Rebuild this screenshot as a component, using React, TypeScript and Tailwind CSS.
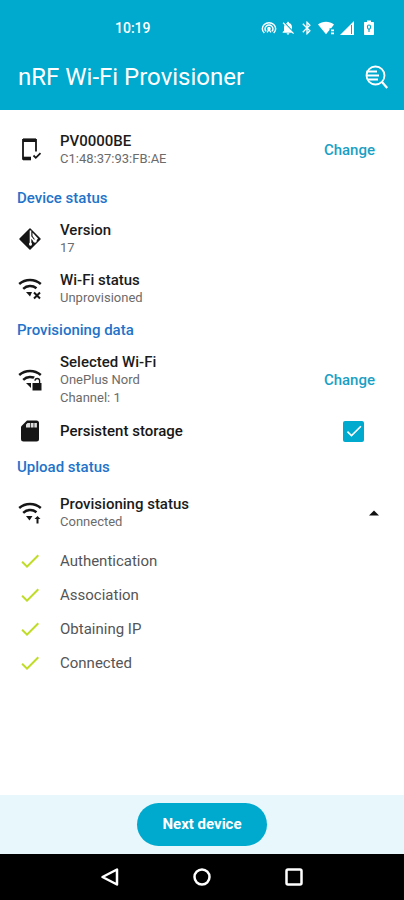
import { useState } from "react";
import type { ReactNode } from "react";
import { MdBluetooth, MdCheck, MdNotificationsOff } from "react-icons/md";

const steps = ["Authentication", "Association", "Obtaining IP", "Connected"];

function HotspotIcon() {
  return (
    <svg viewBox="0 0 24 24" className="size-4" fill="none" stroke="currentColor" strokeWidth="2.2">
      <path d="M5 19.500a10 9 0 1 1 14 0" />
      <path d="M7.600 17a6 5.500 0 1 1 8.800 0" />
      <circle cx="12" cy="13" r="1.600" fill="currentColor" />
      <path d="M9 18.500l3-4 3 4" />
    </svg>
  );
}

function StatusWifiIcon() {
  return (
    <svg viewBox="0 0 18 16" className="h-4 w-[18px]" fill="currentColor">
      <path d="M0 4.500C2.400 2.600 5 1.800 8 1.800s5.600.8 8 2.700L13.200 8.300H11.500V10L8 14.200z" />
      <path d="M13 9.500h3v1.800h-3zM13 12.500h3v1.800h-3z" />
    </svg>
  );
}

function SignalIcon() {
  return (
    <svg viewBox="0 0 16 16" className="size-4" fill="currentColor">
      <path d="M1 15L15 1v14z" />
      <path d="M12.500 5V14" stroke="#00a9ce" strokeWidth="1" />
    </svg>
  );
}

function BatteryIcon() {
  return (
    <svg viewBox="0 0 12 16" className="h-4 w-3" fill="none">
      <path d="M4 0.500h4V2h2.200q.8 0 .8.800v11.400q0 .8-.8.800H1.800q-.8 0-.8-.800V2.800Q1 2 1.800 2H4z" fill="currentColor" />
      <path d="M6 12V9.500M6 9.500C3.800 8.500 4 5 6 5s2.200 3.500 0 4.500" stroke="#00a9ce" strokeWidth="1.200" />
    </svg>
  );
}

function SearchLogIcon() {
  return (
    <svg viewBox="0 0 24 24" className="size-6" fill="none" stroke="currentColor" strokeWidth="1.800">
      <circle cx="11.500" cy="10.500" r="9" />
      <path d="M18 17l5.200 6" strokeWidth="2.200" />
      <path d="M2.500 6.500H13M2.500 10.500H15M3 14.500H14" />
    </svg>
  );
}

function PhoneCheckIcon() {
  return (
    <svg viewBox="0 0 24 24" className="size-6" fill="none" stroke="currentColor">
      <path d="M5 2.200h13" strokeWidth="3.600" />
      <path d="M5 20.500h8" strokeWidth="3.600" />
      <path d="M5 1v20.800M18 1V13.500" strokeWidth="1.800" />
      <path d="M15.500 17.500l2.300 2.300 4.700-4.700" strokeWidth="1.800" />
    </svg>
  );
}

function VersionIcon() {
  return (
    <svg viewBox="0 0 24 24" className="size-6">
      <path d="M12 2L22 12 12 22 2 12z" fill="currentColor" stroke="currentColor" strokeWidth="1.500" strokeLinejoin="round" />
      <path d="M12.500 3.500v15M12.500 9.500l4 5" stroke="#fff" strokeWidth="1.600" />
      <path d="M14.500 5.500l5.500 6-2 2.500-3.500-5z" fill="#fff" />
      <circle cx="12.500" cy="17" r="1.500" fill="#fff" />
      <circle cx="17" cy="14" r="1.700" fill="#fff" />
    </svg>
  );
}

function SdCardIcon() {
  return (
    <svg viewBox="0 0 24 24" className="size-6">
      <path d="M9 1.500h9.500Q21 1.500 21 4v16q0 2.500-2.500 2.500h-13Q3 22.500 3 20V7.500z" fill="currentColor" />
      <path d="M9.500 4h2.800v4.500H8V5.500zM13 4h2.600v4.500h-2.600zM16.300 4h2.600v4.500h-2.600z" fill="#ddd" />
    </svg>
  );
}

function WifiIcon({ children }: { children: ReactNode }) {
  return (
    <svg viewBox="0 0 24 24" className="size-6" fill="none" stroke="currentColor" strokeWidth="2.500">
      <path d="M1.200 7C7.500 1.600 16.500 1.600 22.800 7" />
      <path d="M5.200 11.800C9 8.300 14.500 8.200 18.500 11.300" />
      {children}
    </svg>
  );
}

function Row({
  icon,
  title,
  lines,
  children,
}: {
  icon: ReactNode;
  title: string;
  lines: string[];
  children?: ReactNode;
}) {
  return (
    <div className="flex items-center py-[7px] pl-[18px] pr-[29px]">
      <span className="w-[42px] shrink-0 text-[#161616]">{icon}</span>
      <div className="flex-1">
        <h3 className="text-[15px] font-medium leading-[18px] text-[#1b1b1b]">{title}</h3>
        {lines.map((line) => (
          <p key={line} className="text-[13px] leading-[18px] text-[#6b6b6b]">
            {line}
          </p>
        ))}
      </div>
      {children}
    </div>
  );
}

function SectionTitle({ children }: { children: ReactNode }) {
  return <h2 className="px-[17px] py-[7px] text-[15px] font-medium leading-[18px] text-[#2273c9]">{children}</h2>;
}

function ChangeButton() {
  return (
    <button type="button" className="text-[15px] font-medium leading-[18px] text-[#1a9fc4]">
      Change
    </button>
  );
}

export default function App() {
  const [open, setOpen] = useState(true);
  const [persistent, setPersistent] = useState(true);

  return (
    <div className="flex min-h-screen flex-col bg-white font-['Roboto',sans-serif]">
      {/* Status bar and title */}
      <header className="bg-[#00a9ce] text-white">
        <div className="flex h-14 items-center justify-between pl-[115px] pr-[29px]">
          <span className="text-sm font-medium">10:19</span>
          <div className="flex items-center gap-[3px]">
            <HotspotIcon />
            <MdNotificationsOff className="size-4" />
            <MdBluetooth className="size-4" />
            <StatusWifiIcon />
            <SignalIcon />
            <span className="pl-[5px]">
              <BatteryIcon />
            </span>
          </div>
        </div>
        <div className="flex h-[54px] items-center justify-between pb-3 pl-[18px] pr-4">
          <h1 className="text-2xl">nRF Wi-Fi Provisioner</h1>
          <button type="button" aria-label="Show logs">
            <SearchLogIcon />
          </button>
        </div>
      </header>

      <main className="flex-1 pt-[15px]">
        <Row icon={<PhoneCheckIcon />} title="PV0000BE" lines={["C1:48:37:93:FB:AE"]}>
          <ChangeButton />
        </Row>

        <section className="pt-[7px]">
          <SectionTitle>Device status</SectionTitle>
          <Row icon={<VersionIcon />} title="Version" lines={["17"]} />
          <Row
            icon={
              <WifiIcon>
                <path d="M8 15h6l-2 4.500z" fill="currentColor" stroke="none" />
                <path d="M16 15.500l6 6M22 15.500l-6 6" strokeWidth="2" />
              </WifiIcon>
            }
            title="Wi-Fi status"
            lines={["Unprovisioned"]}
          />
        </section>

        <section>
          <SectionTitle>Provisioning data</SectionTitle>
          <Row
            icon={
              <WifiIcon>
                <path d="M8 15h5v5z" fill="currentColor" stroke="none" />
                <path d="M17 15v-2.500a2.200 2.200 0 0 1 4.400 0V15" stroke="#fff" strokeWidth="3.800" />
                <path d="M14.500 15h9v7.500h-9z" fill="currentColor" stroke="none" />
                <path d="M17 12.800a2.200 2.200 0 0 1 4.600 0V16" strokeWidth="1.300" />
              </WifiIcon>
            }
            title="Selected Wi-Fi"
            lines={["OnePlus Nord", "Channel: 1"]}
          >
            <ChangeButton />
          </Row>
          <label className="flex h-[34px] items-center pl-[18px] pr-10 text-[#161616]">
            <span className="w-[42px] shrink-0">
              <SdCardIcon />
            </span>
            <span className="flex-1 text-[15px] font-medium">Persistent storage</span>
            <span className="grid">
              <input
                type="checkbox"
                checked={persistent}
                onChange={(e) => setPersistent(e.target.checked)}
                className="col-start-1 row-start-1 size-[21px] appearance-none rounded-xs border-2 border-[#00a9ce] checked:bg-[#00a9ce]"
              />
              <MdCheck className="pointer-events-none col-start-1 row-start-1 size-5 place-self-center text-white" />
            </span>
          </label>
        </section>

        <section className="pt-[3px]">
          <SectionTitle>Upload status</SectionTitle>
          <div className="pt-[5px]">
            <Row
              icon={
                <WifiIcon>
                  <path d="M8 15h6.500l-3 4.500z" fill="currentColor" stroke="none" />
                  <path d="M16.500 18l3-3 3 3zM18.500 18h2v4.500h-2z" fill="currentColor" stroke="none" />
                </WifiIcon>
              }
              title="Provisioning status"
              lines={["Connected"]}
            >
              <button type="button" aria-label="Toggle steps" aria-expanded={open} onClick={() => setOpen(!open)} className="-mr-1">
                <svg viewBox="0 0 10 6" className="h-[6px] w-[10px]">
                  <path d="M0 5.500L5 .5l5 5z" fill="#111" />
                </svg>
              </button>
            </Row>
          </div>
          {open && (
            <ul className="pt-[6px]">
              {steps.map((step) => (
                <li key={step} className="flex h-[34px] items-center pl-[18px] text-[15px] text-[#555]">
                  <MdCheck className="mr-[18px] size-6 text-[#c0dc26]" />
                  {step}
                </li>
              ))}
            </ul>
          )}
        </section>
      </main>

      <footer>
        <div className="flex justify-center bg-[#e8f7fb] py-2">
          <button type="button" className="h-[43px] rounded-full bg-[#00a9ce] px-[25px] text-[15px] font-bold text-white">
            Next device
          </button>
        </div>
        {/* System navigation */}
        <nav className="flex h-[46px] items-center justify-center gap-[72px] bg-black text-white">
          <button type="button" aria-label="Back">
            <svg viewBox="0 0 20 20" className="size-5" fill="none" stroke="currentColor" strokeWidth="2.500" strokeLinejoin="round">
              <path d="M17 2.500v15L2.500 10z" />
            </svg>
          </button>
          <button type="button" aria-label="Home">
            <svg viewBox="0 0 20 20" className="size-5" fill="none" stroke="currentColor" strokeWidth="2.500">
              <circle cx="10" cy="10" r="7.500" />
            </svg>
          </button>
          <button type="button" aria-label="Overview">
            <svg viewBox="0 0 20 20" className="size-5" fill="none" stroke="currentColor" strokeWidth="2.500">
              <rect x="2.500" y="2.500" width="15" height="15" rx="1.500" />
            </svg>
          </button>
        </nav>
      </footer>
    </div>
  );
}
